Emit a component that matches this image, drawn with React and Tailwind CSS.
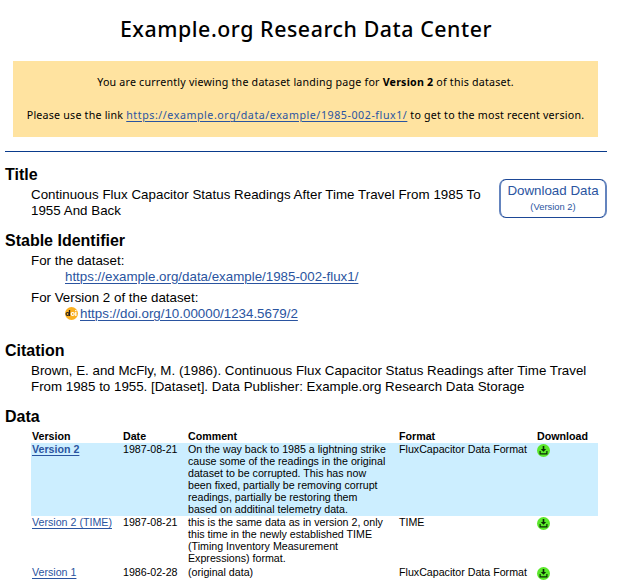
const LINK = "text-[#2a54a0] underline underline-offset-2 decoration-1";

function DownloadIcon() {
  return (
    <svg className="mt-px block h-[13px] w-[13px]" viewBox="0 0 13 13">
      <circle cx="6.5" cy="6.5" r="6.5" fill="#5ae82a" />
      <path d="M5.7 2h1.6v3h1.9L6.5 7.8 3.8 5h1.9z" fill="#0a2a06" />
      <path d="M3.1 7v2.8h6.8V7" fill="none" stroke="#0a2a06" strokeWidth="1.2" />
    </svg>
  );
}

function DoiIcon() {
  return (
    <svg className="mr-[2px] block h-[13px] w-[13px]" viewBox="0 0 13 13">
      <circle cx="6.5" cy="6.5" r="6.5" fill="#fbb01f" />
      <circle cx="2.6" cy="7" r="1.5" fill="none" stroke="#231f20" strokeWidth="1.1" />
      <path d="M4.5 3v6" stroke="#231f20" strokeWidth="1.3" />
      <circle cx="7.7" cy="7" r="1.5" fill="none" stroke="#fff" strokeWidth="1.2" />
      <path d="M10.8 5v4M10.8 3v1.3" stroke="#fff" strokeWidth="1.3" />
    </svg>
  );
}

function Heading({ children }) {
  return <h2 className="h-[18px] whitespace-nowrap text-[16px] font-bold leading-[18px]">{children}</h2>;
}

function Lines({ items }) {
  return items.map((line) => (
    <div key={line} className="whitespace-nowrap">{line}</div>
  ));
}

const ROWS = [
  {
    version: "Version 2",
    date: "1987-08-21",
    comment: [
      "On the way back to 1985 a lightning strike",
      "cause some of the readings in the original",
      "dataset to be corrupted. This has now",
      "been fixed, partially be removing corrupt",
      "readings, partially be restoring them",
      "based on additinal telemetry data.",
    ],
    format: "FluxCapacitor Data Format",
    current: true,
  },
  {
    version: "Version 2 (TIME)",
    date: "1987-08-21",
    comment: [
      "this is the same data as in version 2, only",
      "this time in the newly established TIME",
      "(Timing Inventory Measurement",
      "Expressions) format.",
    ],
    format: "TIME",
  },
  { version: "Version 1", date: "1986-02-28", comment: ["(original data)"], format: "FluxCapacitor Data Format" },
];

const COLS = "grid grid-cols-[91px_65px_211px_138px_62px] pl-[1px]";

export default function App() {
  return (
    <div className="h-[587px] w-[632px] overflow-hidden bg-white pl-[5px] font-['Liberation_Sans',Arial,sans-serif] text-[13.33px] leading-[15.5px] text-black">
      <div className="w-[602px]">
        <header className="font-['Noto_Sans','Open_Sans',sans-serif]">
          <h1 className="h-[61px] whitespace-nowrap pt-[14px] text-center text-[21.33px] font-medium leading-[30px] tracking-[0.56px]">
            Example.org Research Data Center
          </h1>
          <div className="ml-[8px] flex h-[76px] w-[585px] flex-col items-center gap-[17px] whitespace-nowrap bg-[#ffe3a0] pt-[13px] text-[10.67px] leading-[16px] tracking-[0.21px]">
            <p>
              You are currently viewing the dataset landing page for <b>Version 2</b> of this dataset.
            </p>
            <p>
              Please use the link <a className={LINK + " tracking-[0.55px]"}>https://example.org/data/example/1985-002-flux1/</a> to get to the most recent version.
            </p>
          </div>
        </header>
        <div className="mt-[14px] h-px bg-[#0a3b8c]" />

        <section className="flex h-[80px] justify-between pt-[14px]">
          <div>
            <Heading>Title</Heading>
            <div className="ml-[26px] mt-[3px] tracking-[0.025px]">
              <Lines items={["Continuous Flux Capacitor Status Readings After Time Travel From 1985 To", "1955 And Back"]} />
            </div>
          </div>
          <div className="mt-[13px] h-[39px] w-[108px] shrink-0 rounded-[7px] border-x-2 border-y-[1.5px] border-x-[#6484be] border-y-[#1d4896] text-center text-[#2a54a0]">
            <div className="pt-[3px]">Download Data</div>
            <div className="pt-[2px] text-[9.4px] leading-[12px]">(Version 2)</div>
          </div>
        </section>

        <section className="h-[110px]">
          <Heading>Stable Identifier</Heading>
          <div className="ml-[26px] mt-[3px]">
            <p>For the dataset:</p>
            <p className="pl-[34px]"><a className={LINK}>https://example.org/data/example/1985-002-flux1/</a></p>
            <p className="mt-[6px]">For Version 2 of the dataset:</p>
            <p className="flex items-center pl-[34px]">
              <DoiIcon />
              <a className={LINK}>https://doi.org/10.00000/1234.5679/2</a>
            </p>
          </div>
        </section>

        <section className="h-[66px]">
          <Heading>Citation</Heading>
          <div className="ml-[26px] mt-[3px]">
            <Lines
              items={[
                "Brown, E. and McFly, M. (1986). Continuous Flux Capacitor Status Readings after Time Travel",
                "From 1985 to 1955. [Dataset]. Data Publisher: Example.org Research Data Storage",
              ]}
            />
          </div>
        </section>

        <section>
          <Heading>Data</Heading>
          <div className="ml-[26px] mt-[4px] w-[567px] text-[10.67px] leading-[12px]">
            <div className={COLS + " h-[13px] font-bold"}>
              <span>Version</span>
              <span>Date</span>
              <span>Comment</span>
              <span>Format</span>
              <span>Download</span>
            </div>
            {ROWS.map((row) => (
              <div key={row.version} className={COLS + (row.current ? " bg-[#cceeff] pb-px" : " pb-[2px]")}>
                <span><a className={LINK + (row.current ? " font-bold" : "")}>{row.version}</a></span>
                <span>{row.date}</span>
                <div><Lines items={row.comment} /></div>
                <span>{row.format}</span>
                <DownloadIcon />
              </div>
            ))}
          </div>
        </section>
      </div>
    </div>
  );
}
